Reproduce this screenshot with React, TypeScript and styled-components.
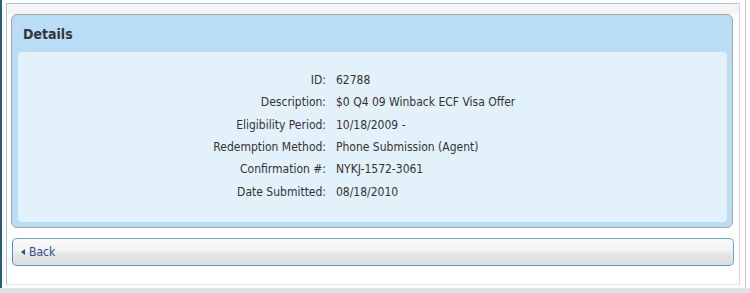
import { Fragment } from "react";
import styled, { createGlobalStyle } from "styled-components";

const FONT = `"DejaVu Sans Condensed", "DejaVu Sans", Tahoma, sans-serif`;

const GlobalStyle = createGlobalStyle`
  *, *::before, *::after {
    box-sizing: border-box;
  }
  html, body {
    margin: 0;
    padding: 0;
    background: #ffffff;
  }
  body {
    font-family: ${FONT};
    font-size: 12px;
    color: #333333;
  }
`;

const Page = styled.div`
  display: flex;
  flex-direction: column;
  width: 750px;
  height: 293px;
  overflow: hidden;
`;

const Main = styled.div`
  display: flex;
  height: 288px;
`;

const SideBar = styled.div`
  width: 2px;
  background: #2a5d78;
`;

const Shell = styled.div`
  width: 744px;
  padding: 3px 0 0 4px;
  border-right: 1px solid #c9c9c9;
  background: #ffffff;
`;

const Frame = styled.div`
  display: flex;
  flex-direction: column;
  width: 734px;
  height: 282px;
  border-top: 1px solid #b4c2d0;
  border-left: 1px solid #b4c2d0;
  border-right: 1px solid #d4dbe2;
  border-bottom: 1px solid #e2e2e2;
`;

const TopStripe = styled.div`
  height: 10px;
  background: #f4f4f4;
`;

const Body = styled.div`
  display: flex;
  flex-direction: column;
  gap: 10px;
  padding: 0 6px 0 4px;
`;

const Panel = styled.section`
  display: flex;
  flex-direction: column;
  height: 214px;
  padding: 0 5px 5px 6px;
  border: 1px solid #a6a6a6;
  border-radius: 6px;
  background: #b8ddf4;
`;

const PanelTitle = styled.h2`
  margin: 0;
  height: 37px;
  padding-left: 5px;
  display: flex;
  align-items: center;
  font-size: 14px;
  font-weight: bold;
  color: #363636;
`;

const PanelContent = styled.div`
  flex: 1;
  padding: 17px 0 0;
  border-radius: 4px;
  background: #e3f1fb;
`;

const DetailGrid = styled.dl`
  display: grid;
  grid-template-columns: 308px 1fr;
  column-gap: 10px;
  grid-auto-rows: 22.3px;
  align-items: center;
  margin: 0;
`;

const Label = styled.dt`
  text-align: right;
  white-space: nowrap;
`;

const Value = styled.dd`
  margin: 0;
  white-space: nowrap;
`;

const BackButton = styled.button`
  display: flex;
  align-items: center;
  gap: 4px;
  width: 722px;
  height: 28px;
  margin-left: 1px;
  padding: 0 0 0 8px;
  border: 1px solid #62acd9;
  border-left-color: #3f90cc;
  border-bottom-color: #4a9bd0;
  border-radius: 5px;
  background: linear-gradient(
    to bottom,
    #fafafa 0%,
    #f3f3f3 45%,
    #e6e6e6 55%,
    #dddddd 100%
  );
  font-family: ${FONT};
  font-size: 12px;
  color: #2d4a8e;
  cursor: pointer;
`;

const Arrow = styled.span`
  width: 0;
  height: 0;
  border-top: 3px solid transparent;
  border-bottom: 3px solid transparent;
  border-right: 4px solid #2d4a8e;
`;

const BottomBand = styled.div`
  flex: 1;
  background: #dfe3e7;
`;

const details: [string, string][] = [
  ["ID:", "62788"],
  ["Description:", "$0 Q4 09 Winback ECF Visa Offer"],
  ["Eligibility Period:", "10/18/2009 -"],
  ["Redemption Method:", "Phone Submission (Agent)"],
  ["Confirmation #:", "NYKJ-1572-3061"],
  ["Date Submitted:", "08/18/2010"],
];

export default function App() {
  return (
    <>
      <GlobalStyle />
      <Page>
        <Main>
          <SideBar />
          <Shell>
            <Frame>
              <TopStripe />
              <Body>
                <Panel>
                  <PanelTitle>Details</PanelTitle>
                  <PanelContent>
                    <DetailGrid>
                      {details.map(([label, value]) => (
                        <Fragment key={label}>
                          <Label>{label}</Label>
                          <Value>{value}</Value>
                        </Fragment>
                      ))}
                    </DetailGrid>
                  </PanelContent>
                </Panel>
                <BackButton type="button">
                  <Arrow />
                  Back
                </BackButton>
              </Body>
            </Frame>
          </Shell>
        </Main>
        <BottomBand />
      </Page>
    </>
  );
}
